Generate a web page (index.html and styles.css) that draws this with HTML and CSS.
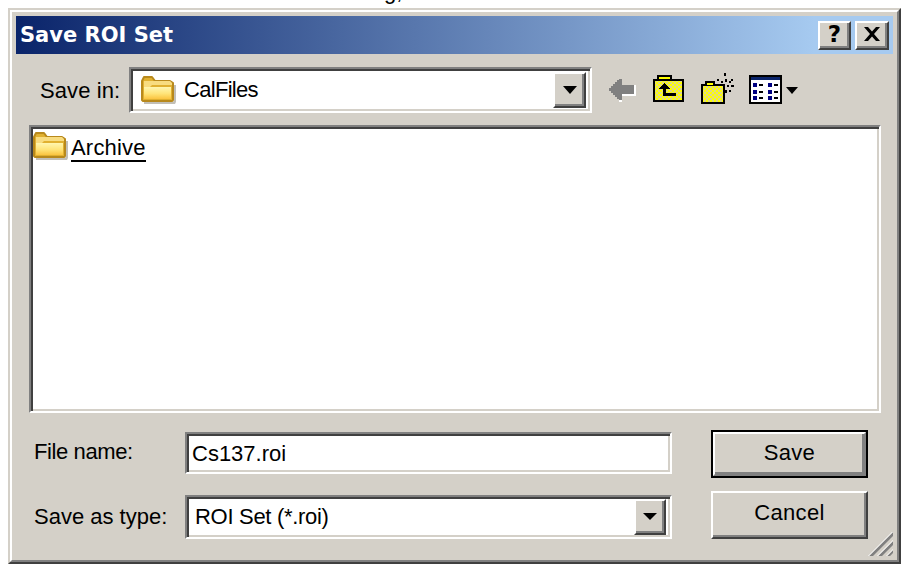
FILE: index.html
```html
<!DOCTYPE html>
<html lang="en">
<head>
<meta charset="utf-8">
<title>Save ROI Set</title>
<link rel="stylesheet" href="styles.css">
</head>
<body>
<div class="clip"><div class="clip-text">g,</div></div>
<div class="window">
  <div class="window-inner">
    <div class="title">
      <span class="title-text">Save ROI Set</span>
      <span class="tbtn tbtn-help raised"><span>?</span></span>
      <span class="tbtn raised">
        <svg class="x-icon" viewBox="0 0 16 14" width="16" height="14"><path d="M0 0h4l4 4.500 4-4.500h4l-6 7 6 7h-4l-4-4.500-4 4.500h-4l6-7z" fill="#000"/></svg>
      </span>
    </div>

    <div class="row-top">
      <label class="savein">Save in:</label>
      <div class="combo combo-top sunken">
        <svg class="folder folder-top" viewBox="0 0 36 30" width="36" height="30"><use href="#folder"/></svg>
        <span class="combo-text">CalFiles</span>
        <span class="drop raised"><i class="tri"></i></span>
      </div>
      <div class="tools">
        <svg class="t-back" viewBox="608 72 29 34" width="29" height="34" shape-rendering="crispEdges">
          <path d="M636 85v11h-14v6h-3v-6h3v-2h12v-9z" fill="#fff"/>
          <path d="M609 88h2v-2h2v-2h2v-2h2v-2h2v-1h3v6h12v9h-12v6h-3v-1h-2v-2h-2v-2h-2v-2h-2v-2h-2z" fill="#808080"/>
        </svg>
        <svg class="t-up" viewBox="653 72 32 34" width="32" height="34" shape-rendering="crispEdges">
          <path d="M657 75h15v4h12v23h-31v-23h4z" fill="#000"/>
          <rect x="655" y="81" width="27" height="19" fill="url(#dither)"/>
          <rect x="659" y="77" width="11" height="2" fill="#ff0"/>
          <path d="M664 83l6 6h-4v4h10v3h-13v-7h-4z" fill="#000"/>
        </svg>
        <svg class="t-new" viewBox="701 72 34 34" width="34" height="34" shape-rendering="crispEdges">
          <path d="M705 81h10v3h10v20h-24v-20h4z" fill="#000"/>
          <rect x="703" y="86" width="20" height="16" fill="url(#dither)"/>
          <rect x="707" y="83" width="6" height="2" fill="#ff0"/>
          <path d="M724 73h2v3h-2zM717 79h2v2h-2zM725 79h2v3h-2zM731 79h2v2h-2zM721 81h2v2h-2zM729 81h2v2h-2zM727 85h2v2h-2zM731 85h3v2h-3zM729 90h2v2h-2zM725 90h2v3h-2z" fill="#000"/>
        </svg>
        <svg class="t-view" viewBox="749 72 33 34" width="33" height="34" shape-rendering="crispEdges">
          <rect x="749" y="75" width="33" height="29" fill="#000"/>
          <rect x="751" y="77" width="29" height="25" fill="#fff"/>
          <rect x="751" y="77" width="29" height="3" fill="#0a246a"/>
          <path d="M753 83h4v4h-4zM768 83h4v4h-4zM753 90h4v4h-4zM768 90h4v4h-4zM753 96h4v4h-4zM768 96h4v4h-4z" fill="#000080"/>
          <path d="M759 84h4v2h-4zM774 84h4v2h-4zM759 91h4v2h-4zM774 91h4v2h-4zM759 97h4v2h-4zM774 97h4v2h-4z" fill="#000"/>
        </svg>
        <i class="tri tri-view"></i>
      </div>
    </div>

    <div class="list sunken">
      <div class="item">
        <svg class="folder" viewBox="0 0 36 30" width="36" height="30"><use href="#folder"/></svg>
        <span class="item-text">Archive</span>
      </div>
    </div>

    <div class="bottom">
      <label class="lbl lbl-file">File name:</label>
      <div class="field field-file sunken"><span>Cs137.roi</span></div>
      <button class="btn btn-default" type="button"><span class="btn-face">Save</span></button>
      <label class="lbl lbl-type">Save as type:</label>
      <div class="field field-type sunken"><span class="type-text">ROI Set (*.roi)</span><span class="drop raised"><i class="tri"></i></span></div>
      <button class="btn" type="button"><span class="btn-face">Cancel</span></button>
    </div>

    <svg class="grip" viewBox="0 0 25 24" width="25" height="24">
      <path d="M25 0v4l-20 20h-4zM25 9v4l-11 11h-4zM25 18v3l-3 3h-3z" fill="#808080"/>
      <path d="M1 24l-1 0 25-25v1zM10 24h-1l16-16v1zM19 24h-1l7-7v1z" fill="#fff"/>
    </svg>
  </div>
</div>

<svg class="defs" width="0" height="0">
  <defs>
    <pattern id="dither" width="4" height="4" patternUnits="userSpaceOnUse">
      <rect width="4" height="4" fill="#ff0"/>
      <rect width="2" height="2" fill="#dcd88c"/>
      <rect x="2" y="2" width="2" height="2" fill="#dcd88c"/>
    </pattern>
    <linearGradient id="fgrad" x1="0" y1="0" x2="0" y2="1">
      <stop offset="0" stop-color="#fff6b0"/>
      <stop offset="0.55" stop-color="#ffe478"/>
      <stop offset="1" stop-color="#fbc440"/>
    </linearGradient>
    <g id="folder">
      <path d="M4 27h28l2-1v-16h2v17l-1 2h-31z" fill="#a8a498" opacity=".7"/>
      <path d="M2 6l2-4h8l3 4h15l3 2v17l-1 1h-29l-1-1z" fill="#e0b030" stroke="#b8891c" stroke-width="2" stroke-linejoin="round"/>
      <path d="M4 6h26l2 2v2h-20l-2 2h-6z" fill="#f8dc80"/>
      <path d="M4 12h27v12h-27z" fill="url(#fgrad)"/>
    </g>
  </defs>
</svg>
</body>
</html>
```

FILE: styles.css
```css
* { box-sizing: border-box; }
html, body { margin: 0; padding: 0; background: #fff; }
body {
  width: 909px;
  height: 572px;
  overflow: hidden;
  font-family: "Liberation Sans", Arial, sans-serif;
  font-size: 22px;
  color: #000;
}
.clip { height: 8px; overflow: hidden; padding-left: 384px; }
.clip-text { margin-top: -19px; line-height: 22px; font-size: 22px; }
.defs { position: absolute; }

.window {
  width: 893px;
  height: 556px;
  margin-left: 8px;
  border: 2px solid;
  border-color: #d4d0c8 #404040 #404040 #d4d0c8;
  background: #d4d0c8;
}
.window-inner {
  position: relative;
  height: 100%;
  border: 2px solid;
  border-color: #fff #808080 #808080 #fff;
  padding: 4px;
}

.raised {
  border: 2px solid;
  border-color: #fff #404040 #404040 #fff;
  box-shadow: inset -2px -2px 0 #808080;
  background: #d4d0c8;
}
.sunken {
  border: 2px solid;
  border-color: #808080 #fff #fff #808080;
  box-shadow: inset 2px 2px 0 #404040, inset -2px -2px 0 #d4d0c8;
  background: #fff;
}

.title {
  display: flex;
  align-items: center;
  height: 38px;
  padding-left: 4px;
  padding-right: 4px;
  background: linear-gradient(90deg, #0a246a, #a6caf0 91%);
}
.title-text {
  flex: 1;
  color: #fff;
  font-family: "DejaVu Sans", sans-serif;
  font-weight: 700;
  font-size: 21px;
  line-height: 38px;
  margin-top: -1px;
}
.tbtn {
  display: flex;
  align-items: center;
  justify-content: center;
  width: 34px;
  height: 29px;
  padding-bottom: 2px;
}
.tbtn-help {
  width: 33px;
  margin-right: 4px;
  font-family: "DejaVu Sans", sans-serif;
  font-weight: 700;
  font-size: 23px;
  line-height: 24px;
}

.row-top { display: flex; margin-top: 13px; height: 46px; }
.savein { width: 89px; margin-left: 24px; line-height: 46px; padding-top: 1px; letter-spacing: .1px; }
.combo { display: flex; align-items: center; }
.combo-top { width: 463px; height: 46px; padding: 4px 4px 4px 9px; }
.folder-top { margin-top: -1px; }
.combo-text { flex: 1; margin-left: 8px; padding-bottom: 1px; letter-spacing: -.7px; }
.drop { display: flex; align-items: center; justify-content: center; }
.combo-top .drop { width: 33px; height: 36px; }
.tri {
  display: block;
  width: 0;
  height: 0;
  border-style: solid;
  border-width: 8px 7.500px 0;
  border-color: #000 transparent transparent;
}
.tools { display: flex; margin-top: 5px; margin-left: 16px; align-items: flex-start; }
.t-up { margin-left: 16px; }
.t-new { margin-left: 16px; }
.t-view { margin-left: 14px; }
.tri-view { margin: 15px 0 0 4px; border-width: 7px 6px 0; }
.tools svg { display: block; }

.list {
  width: 852px;
  height: 288px;
  margin: 12px 0 0 13px;
  padding: 4px 0 0 1px;
}
.item { display: flex; align-items: flex-start; }
.item .folder { display: block; }
.item-text {
  margin-left: 3px;
  margin-top: 2px;
  height: 29px;
  line-height: 30px;
  border-bottom: 2px solid #000;
  letter-spacing: .2px;
}

.bottom {
  display: grid;
  grid-template-columns: 151px 487px 196px;
  grid-template-rows: 48px 48px;
  row-gap: 13px;
  margin: 17px 0 0 18px;
}
.lbl { line-height: 26px; }
.lbl-file { margin-top: 9px; letter-spacing: -.4px; }
.lbl-type { margin-top: 13px; }
.field { display: flex; align-items: center; }
.field-file { height: 42px; margin-top: 2px; padding-left: 5px; padding-top: 2px; }
.field-type { height: 44px; margin-top: 4px; padding: 3px 4px 3px 8px; }
.type-text { flex: 1; letter-spacing: -.3px; }
.field-type .drop { width: 32px; height: 36px; margin-top: -1px; }
.field-type .tri { border-width: 7px 7px 0; }

.btn {
  display: block;
  height: 48px;
  width: 157px;
  margin-left: 39px;
  padding: 0;
  border: 0;
  background: none;
  font: inherit;
  color: inherit;
}
.btn-face {
  display: block;
  height: 100%;
  line-height: 40px;
  text-align: center;
  border: 2px solid;
  border-color: #fff #404040 #404040 #fff;
  box-shadow: inset -2px -2px 0 #808080;
  background: #d4d0c8;
  letter-spacing: .3px;
}
.btn-default { border: 2px solid #000; }
.btn-default .btn-face { line-height: 38px; border-color: #fff #808080 #808080 #fff; }

.grip { position: absolute; right: 4px; bottom: 4px; display: block; }
```
